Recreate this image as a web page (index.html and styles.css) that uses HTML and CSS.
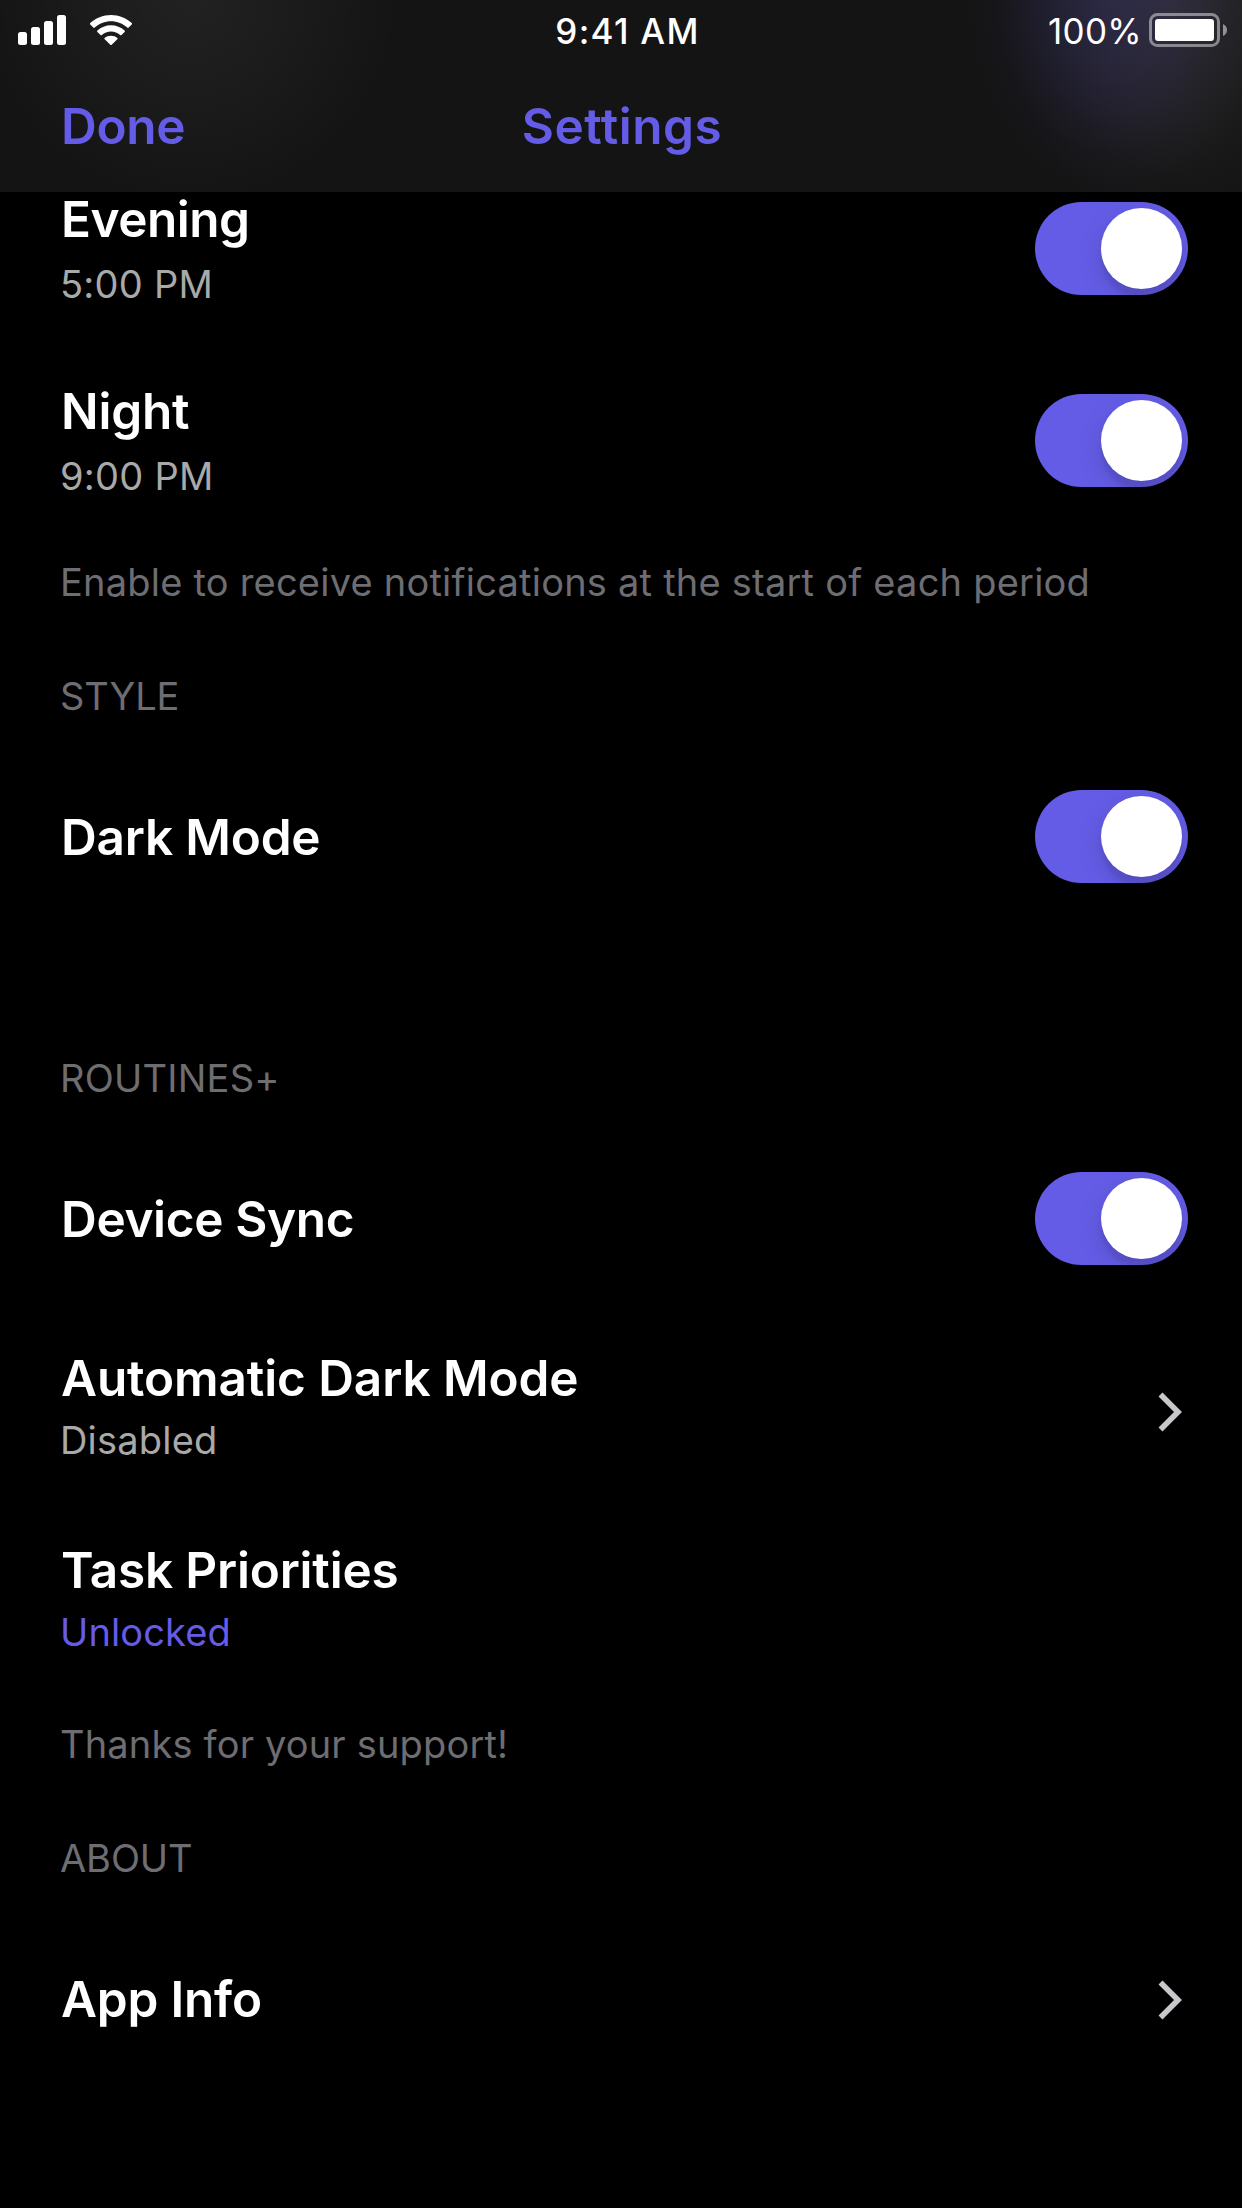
FILE: index.html
```html
<!DOCTYPE html>
<html lang="en">
<head>
<meta charset="utf-8">
<title>Settings</title>
<link rel="stylesheet" href="styles.css">
</head>
<body>
<div class="screen">
  <header class="header">
    <div class="status">
      <div class="status-left">
        <svg class="signal" width="48" height="30" viewBox="0 0 48 30">
          <rect x="0" y="17" width="9" height="13" rx="2.5"/>
          <rect x="13" y="12" width="9" height="18" rx="2.5"/>
          <rect x="26" y="6" width="9" height="24" rx="2.5"/>
          <rect x="39" y="0" width="9" height="30" rx="2.5"/>
        </svg>
        <svg class="wifi" width="42" height="30" viewBox="0 0 42 30">
          <path d="M21 0C29 0 36.300 3 41.700 8.100Q42.400 8.900 41.700 9.600L38.700 12.600Q38 13.200 37.300 12.600C32.900 8.600 27.200 6.300 21 6.300S9.100 8.600 4.700 12.600Q4 13.200 3.300 12.600L.3 9.600Q-.4 8.900 .3 8.100C5.700 3 13 0 21 0Z"/>
          <path d="M21 10.300C26.200 10.300 31 12.300 34.600 15.600Q35.300 16.300 34.600 17L31.500 20Q30.800 20.600 30.100 20C27.700 17.900 24.500 16.600 21 16.600S14.300 17.900 11.900 20Q11.200 20.600 10.500 20L7.400 17Q6.700 16.300 7.400 15.600C11 12.300 15.800 10.300 21 10.300Z"/>
          <path d="M21 20.700C23.500 20.700 25.700 21.600 27.300 23Q28 23.700 27.300 24.300L21.700 29.700Q21 30.300 20.300 29.700L14.700 24.300Q14 23.700 14.700 23C16.300 21.600 18.500 20.700 21 20.700Z"/>
        </svg>
      </div>
      <div class="clock">9:41 AM</div>
      <div class="status-right">
        <span class="percent">100%</span>
        <svg class="battery" width="78" height="34" viewBox="0 0 78 34">
          <rect class="battery-case" x="1.500" y="1.500" width="68" height="31" rx="7"/>
          <rect x="6" y="6" width="59" height="22" rx="3"/>
          <path class="battery-tip" d="M74 11Q78 13 78 17T74 23Z"/>
        </svg>
      </div>
    </div>
    <nav class="nav">
      <a class="done">Done</a>
      <h1 class="nav-title">Settings</h1>
    </nav>
  </header>

  <main class="list">
    <section class="section">
      <div class="row">
        <div class="label"><div class="title evening">Evening</div><div class="sub time">5:00 PM</div></div>
        <span class="toggle"><span class="thumb"></span></span>
      </div>
      <div class="row">
        <div class="label"><div class="title">Night</div><div class="sub time">9:00 PM</div></div>
        <span class="toggle"><span class="thumb"></span></span>
      </div>
      <p class="note">Enable to receive notifications at the start of each period</p>
    </section>

    <section class="section section-style">
      <h2 class="heading">STYLE</h2>
      <div class="row">
        <div class="title">Dark Mode</div>
        <span class="toggle"><span class="thumb"></span></span>
      </div>
    </section>

    <section class="section section-plus">
      <h2 class="heading wide">ROUTINES+</h2>
      <div class="row row-sync">
        <div class="title sync">Device Sync</div>
        <span class="toggle"><span class="thumb"></span></span>
      </div>
      <div class="row row-link">
        <div class="label"><div class="title auto">Automatic Dark Mode</div><div class="sub">Disabled</div></div>
        <svg class="chevron" width="24" height="40" viewBox="0 0 24 40"><path d="M2.500 2.500L20 20L2.500 37.500"/></svg>
      </div>
      <div class="row row-link">
        <div class="label"><div class="title tasks">Task Priorities</div><div class="sub unlocked">Unlocked</div></div>
      </div>
      <p class="note thanks">Thanks for your support!</p>
    </section>

    <section class="section section-about">
      <h2 class="heading">ABOUT</h2>
      <div class="row">
        <div class="title">App Info</div>
        <svg class="chevron" width="24" height="40" viewBox="0 0 24 40"><path d="M2.500 2.500L20 20L2.500 37.500"/></svg>
      </div>
    </section>
  </main>
</div>
</body>
</html>
```
FILE: styles.css
```css
* {
  box-sizing: border-box;
  margin: 0;
  padding: 0;
}

body {
  background: #000;
  color: #fff;
  font-family: "Inter", "Liberation Sans", sans-serif;
}

.screen {
  width: 1242px;
  height: 2208px;
  overflow: hidden;
}

.header {
  position: relative;
  z-index: 1;
  height: 192px;
  padding-top: 11px;
  background:
    radial-gradient(ellipse 150px 205px at 1112px -5px, rgba(62, 56, 135, .34), rgba(62, 56, 135, .2) 45%, rgba(62, 56, 135, .05) 78%, rgba(62, 56, 135, 0)),
    radial-gradient(ellipse 170px 230px at 1172px -5px, rgba(90, 86, 88, .34), rgba(90, 86, 88, .19) 45%, rgba(90, 86, 88, .05) 78%, rgba(90, 86, 88, 0)),
    radial-gradient(ellipse 210px 210px at 190px -5px, rgba(255, 255, 255, .06), rgba(255, 255, 255, .03) 50%, rgba(255, 255, 255, 0)),
    #141414;
}

.status {
  display: grid;
  grid-template-columns: 1fr auto 1fr;
  height: 40px;
  padding: 0 15px 0 18px;
  font-size: 35px;
  line-height: 40px;
}

.status svg {
  fill: #fff;
}

.status-left {
  display: flex;
  gap: 24px;
  padding-top: 4px;
}

.clock {
  padding-left: 10px;
  font-weight: 500;
  letter-spacing: 1.3px;
}

.status-right {
  display: flex;
  justify-content: flex-end;
  gap: 7px;
}

.percent {
  letter-spacing: .3px;
}

.battery {
  margin-top: 2px;
}

.status .battery-case {
  fill: none;
  stroke: rgba(255, 255, 255, .45);
  stroke-width: 3;
}

.status .battery-tip {
  fill: rgba(255, 255, 255, .5);
}

.nav {
  display: grid;
  grid-template-columns: 1fr auto 1fr;
  margin-top: 45px;
  padding: 0 61px;
  color: #645ce6;
  font-size: 49.5px;
  font-weight: 600;
  line-height: 60px;
}

.done {
  letter-spacing: -.3px;
}

.nav-title {
  padding-left: 2px;
  font-size: inherit;
  font-weight: inherit;
  letter-spacing: .5px;
}

/* The list is scrolled so its first row sits partly under the header. */
.list {
  margin-top: -39px;
}

.row {
  display: flex;
  align-items: center;
  justify-content: space-between;
  height: 192px;
  padding: 0 54px 0 61px;
}

.row-link .label {
  padding-bottom: 11px;
}

.title {
  font-size: 49.5px;
  font-weight: 600;
  line-height: 60px;
  letter-spacing: -.2px;
}

.evening {
  letter-spacing: -.48px;
}

.sync {
  letter-spacing: -.35px;
}

.auto {
  letter-spacing: -.1px;
}

.tasks {
  letter-spacing: -.2px;
}

.sub {
  margin: 7px 0 0 -1px;
  color: #a9a9a9;
  font-size: 38px;
  line-height: 50px;
  letter-spacing: .2px;
}

.time {
  margin-top: 10px;
  letter-spacing: .25px;
}

.unlocked {
  color: #645ce6;
  letter-spacing: .13px;
}

.note,
.heading {
  padding: 0 60px;
  color: #6d6d72;
  font-size: 38px;
  font-weight: 400;
  line-height: 50px;
}

.note {
  padding-top: 20px;
  letter-spacing: .22px;
}

.thanks {
  padding-top: 19px;
  letter-spacing: .17px;
}

.heading {
  letter-spacing: -.1px;
}

.wide {
  letter-spacing: .24px;
}

.section-style {
  padding-top: 64px;
}

.section-style .row {
  margin-top: 20px;
}

.section-plus {
  padding-top: 120px;
}

.row-sync {
  height: 194px;
  margin-top: 19px;
}

.section-about {
  padding-top: 64px;
}

.section-about .row {
  margin-top: 20px;
}

.toggle {
  display: flex;
  justify-content: flex-end;
  width: 153px;
  height: 93px;
  margin-bottom: 1px;
  padding: 6px;
  border-radius: 47px;
  background: #645ce6;
  overflow: hidden;
}

.thumb {
  width: 81px;
  height: 81px;
  border-radius: 50%;
  background: #fff;
  box-shadow: 0 9px 24px rgba(0, 0, 0, .15), 0 9px 3px rgba(0, 0, 0, .06);
}

.chevron {
  margin-right: 6px;
  fill: none;
  stroke: #c7c7cc;
  stroke-width: 5.6;
}

.section-about .chevron {
  margin-top: 1px;
}
```
